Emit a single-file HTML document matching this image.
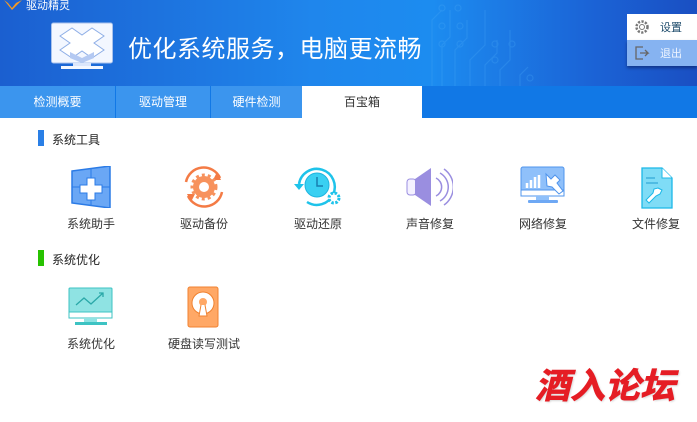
<!DOCTYPE html>
<html><head><meta charset="utf-8"><style>
*{margin:0;padding:0;box-sizing:border-box}
body{width:697px;height:422px;overflow:hidden;background:#fff;font-family:"Liberation Sans","Noto Sans CJK SC",sans-serif;position:relative}
.hdr{position:absolute;left:0;top:0;width:697px;height:86px;background:linear-gradient(90deg,#1b5fd0 0%,#1f86ec 45%,#1c8cf0 62%,#1b63d6 85%,#1a4fc2 100%)}
.tabs{position:absolute;left:0;top:86px;width:697px;height:32px;background:#1178e6}
.tab{position:absolute;top:0;height:32px;line-height:32px;text-align:center;color:#fff;font-size:12px;background:#3b95ee}
.abs{position:absolute}
.lbl{position:absolute;font-size:12px;color:#333;width:100px;text-align:center}
.sec{position:absolute;font-size:12px;color:#222}
</style></head><body>
<div class="hdr"></div>
<svg class="abs" style="left:430px;top:0" width="130" height="86"><g stroke="#4aa9f6" stroke-width="1.2" fill="none" opacity=".28">
<path d="M2 86V20l10-10M12 86V45l8-8V10M25 86V50l12-12V20M40 86V60l15-15V10M55 86V65l12-12V40M70 86V70l10-10V30M90 86V75l8-8"/>
<circle cx="12" cy="8" r="3"/><circle cx="28" cy="8" r="3"/><circle cx="12" cy="26" r="3"/><circle cx="30" cy="26" r="3"/><circle cx="12" cy="44" r="3"/><circle cx="30" cy="44" r="3"/><circle cx="65" cy="44" r="3"/><circle cx="82" cy="44" r="3"/><circle cx="65" cy="60" r="3"/><circle cx="100" cy="78" r="3"/></g></svg>
<svg class="abs" style="left:2px;top:0" width="22" height="12"><path d="M2 0l8 10 10-10-6 3-4 5-4-5z" fill="#f59a23"/></svg>
<div class="abs" style="left:26px;top:-3px;color:#fff;font-size:11px">驱动精灵</div>
<svg class="abs" style="left:50px;top:20px" width="66" height="52">
<rect x="1.5" y="3" width="61" height="40" rx="2" fill="#f3f7ff" stroke="#a8c2ec"/>
<rect x="23" y="43" width="18" height="3" fill="#dbe6fb"/><rect x="11" y="46" width="42" height="3" fill="#f3f7ff"/>
<path d="M10 16l12-8 10 7 10-7 12 8-10 7 10 7-12 8-10-7-10 7-12-8 10-7z" fill="#fff" stroke="#8eaee6"/>
<path d="M20 32l12 6 12-6v6l-12 5-12-5z" fill="#b4c9f2"/></svg>
<div class="abs" style="left:128px;top:29px;color:#fff;font-size:24px;letter-spacing:0.5px">优化系统服务，电脑更流畅</div>
<div class="abs" style="left:627px;top:14px;width:70px;height:26px;background:#fff"></div>
<div class="abs" style="left:627px;top:40px;width:70px;height:26px;background:#86b3f1;box-shadow:0 2px 3px rgba(0,0,40,.4)"></div>
<svg class="abs" style="left:634px;top:19px" width="16" height="16"><circle cx="8" cy="8" r="5.5" fill="none" stroke="#777" stroke-width="2.5" stroke-dasharray="2.2 1.4"/><circle cx="8" cy="8" r="2.5" fill="none" stroke="#777" stroke-width="1"/></svg>
<div class="abs" style="left:660px;top:19px;font-size:11px;color:#1d4b6b">设置</div>
<svg class="abs" style="left:634px;top:45px" width="16" height="16"><path d="M9 2H2v12h7M6 8h8l-3-3m3 3l-3 3" stroke="#666" fill="none" stroke-width="1.3"/></svg>
<div class="abs" style="left:660px;top:45px;font-size:11px;color:#eef4ff">退出</div>
<div class="tabs">
<div class="tab" style="left:0;width:115px">检测概要</div>
<div class="tab" style="left:116px;width:94px">驱动管理</div>
<div class="tab" style="left:211px;width:91px">硬件检测</div>
<div class="tab" style="left:302px;width:120px;background:#fff;color:#333">百宝箱</div>
</div>
<div class="abs" style="left:38px;top:130px;width:6px;height:16px;background:#2a7fe6"></div>
<div class="sec" style="left:52px;top:131px">系统工具</div>
<div class="abs" style="left:38px;top:250px;width:6px;height:16px;background:#27c200"></div>
<div class="sec" style="left:52px;top:251px">系统优化</div>
<svg class="abs" style="left:70px;top:166px" width="42" height="42"><path d="M2 5l38-5v42L2 37z" fill="#6aa7f5" stroke="#2b7be6" stroke-width="1.5"/><path d="M2 21h38M21 2v38" stroke="#2b7be6"/><path d="M17 12h8v7h7v8h-7v7h-8v-7h-7v-8h7z" fill="#fff" stroke="#2b7be6"/></svg>
<svg class="abs" style="left:179px;top:164px" width="50" height="46"><path d="M7 18a18 18 0 0 1 34-4M43 28a18 18 0 0 1-34 4" stroke="#f47b45" stroke-width="2.5" fill="none"/><path d="M38 8l4 8-8 0zM12 38l-4-8 8 0z" fill="#f47b45"/><circle cx="25" cy="23" r="11" fill="#f7925d"/><circle cx="25" cy="23" r="5" fill="#fff"/><circle cx="25" cy="23" r="12" fill="none" stroke="#f7925d" stroke-width="3" stroke-dasharray="3 3"/></svg>
<svg class="abs" style="left:290px;top:164px" width="56" height="46"><path d="M9 20a18 18 0 1 1 8 18" stroke="#1ec3ea" stroke-width="2.5" fill="none"/><path d="M4 20h10l-5 6z" fill="#1ec3ea"/><circle cx="27" cy="21" r="12" fill="#3ad0f2" stroke="#1eb5e0"/><path d="M27 13v9h6" stroke="#177fb0" stroke-width="1.5" fill="none"/><circle cx="44" cy="34" r="5" fill="#fff" stroke="#1ec3ea" stroke-width="3" stroke-dasharray="2.5 1.5"/></svg>
<svg class="abs" style="left:405px;top:166px" width="48" height="42"><rect x="2" y="13" width="9" height="16" rx="3" fill="#f4f1ff" stroke="#9a8ee0"/><path d="M10 13l16-11v38L10 29z" fill="#9a8ee0"/><path d="M31 12a10 10 0 0 1 0 18M35 7a16 16 0 0 1 0 28M39 3a22 22 0 0 1 0 36" stroke="#9a8ee0" stroke-width="1.5" fill="none"/></svg>
<svg class="abs" style="left:520px;top:166px" width="46" height="40"><rect x="1" y="1" width="43" height="29" rx="2" fill="#8fc0fa" stroke="#4f94ec"/><rect x="1" y="24" width="43" height="6" fill="#fff" stroke="#4f94ec"/><rect x="16" y="30" width="13" height="4" fill="#8fc0fa"/><rect x="8" y="34" width="30" height="3" rx="1" fill="#6ea8f4"/><path d="M7 22v-5M11 22v-8M15 22v-11M19 22v-13" stroke="#fff" stroke-width="2.5"/><path d="M26 8l5 5 4-4 5 5-3 3 6 8-4 3-7-7-5-1z" fill="#fff" stroke="#4f94ec"/></svg>
<svg class="abs" style="left:640px;top:166px" width="34" height="44"><path d="M2 2h20l10 10v30H2z" fill="#7fdcf6" stroke="#1bb8e8" stroke-width="1.3"/><path d="M22 2v10h10" fill="#fff" stroke="#1bb8e8"/><path d="M6 12h9M6 17h12" stroke="#1f9dd0"/><path d="M18 22l4 2-2 4-4 2-7 7-3-3 7-7 1-4z" fill="#fff" stroke="#1bb8e8"/></svg>
<div class="lbl" style="left:41px;top:215px">系统助手</div>
<div class="lbl" style="left:154px;top:215px">驱动备份</div>
<div class="lbl" style="left:268px;top:215px">驱动还原</div>
<div class="lbl" style="left:380px;top:215px">声音修复</div>
<div class="lbl" style="left:493px;top:215px">网络修复</div>
<div class="lbl" style="left:606px;top:215px">文件修复</div>
<svg class="abs" style="left:68px;top:287px" width="46" height="40"><rect x="1" y="1" width="43" height="30" rx="1" fill="#8fe3e3" stroke="#3dc3c3"/><rect x="1" y="25" width="43" height="6" fill="#fff" stroke="#3dc3c3"/><rect x="16" y="31" width="13" height="4" fill="#8fe3e3"/><rect x="7" y="35" width="32" height="3" fill="#3dc3c3"/><path d="M8 18l8-7 7 6 12-11m-4 0h4v4" stroke="#2aa8a8" fill="none" stroke-width="1.3"/></svg>
<svg class="abs" style="left:187px;top:286px" width="32" height="42"><rect x="1" y="1" width="30" height="40" rx="2" fill="#ffa866" stroke="#f08230"/><circle cx="16" cy="17" r="11" fill="#fff" stroke="#f08230"/><circle cx="16" cy="16" r="4" fill="#ffa866"/><path d="M14 19l-2 11h8l-2-11" fill="#fff" stroke="#f08230"/></svg>
<div class="lbl" style="left:41px;top:335px">系统优化</div>
<div class="lbl" style="left:154px;top:335px">硬盘读写测试</div>
<div class="abs" style="left:535px;top:358px;font-size:35px;font-weight:bold;font-style:italic;color:#e51d24;letter-spacing:0;text-shadow:1px 1px 2px rgba(0,0,0,.2);-webkit-text-stroke:0.8px #e51d24">酒入论坛</div>
</body></html>
